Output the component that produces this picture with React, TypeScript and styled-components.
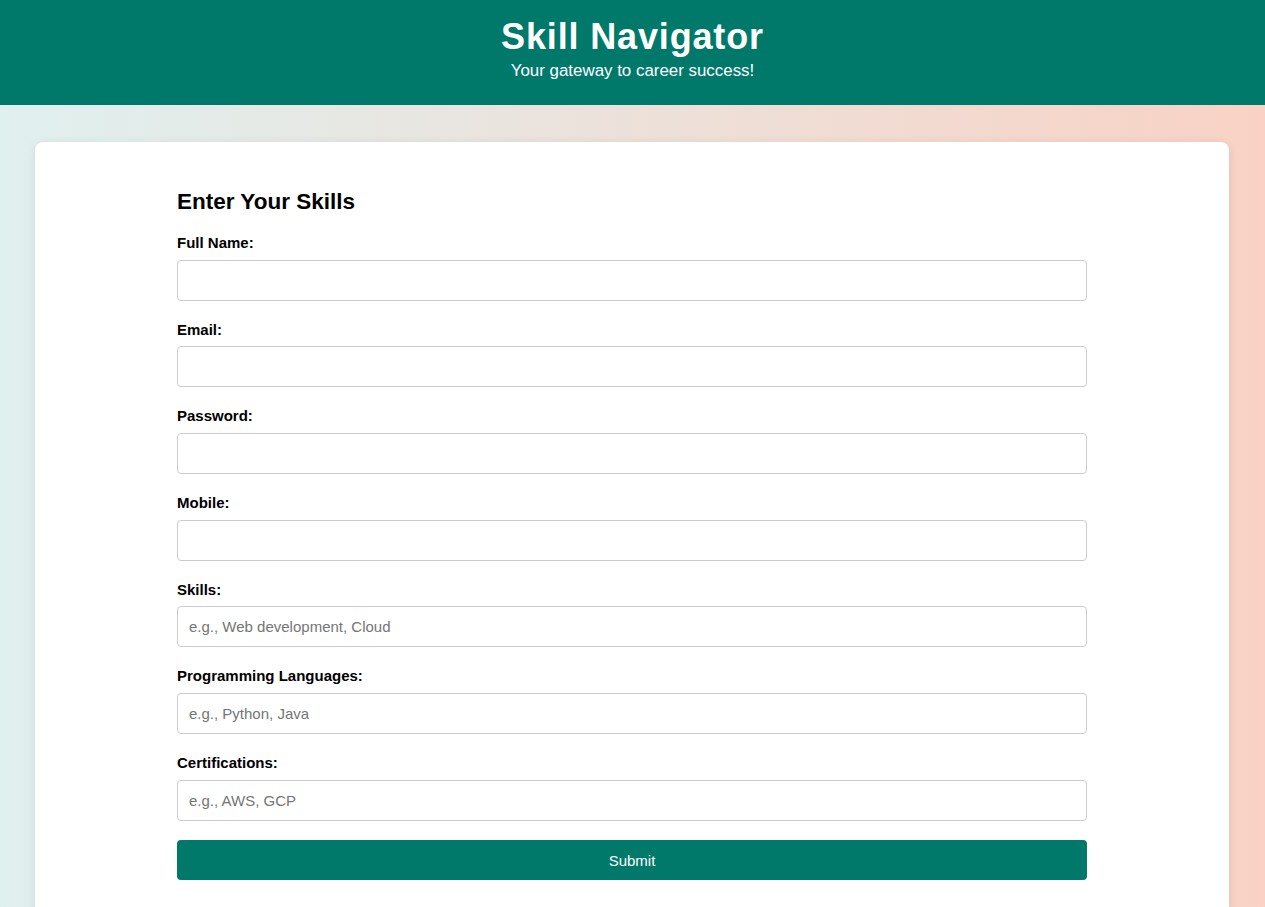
import React from "react";
import styled, { createGlobalStyle } from "styled-components";

const GlobalStyle = createGlobalStyle`
  * { box-sizing: border-box; }
  html, body {
    margin: 0;
    padding: 0;
    font-family: "Liberation Sans", Arial, sans-serif;
  }
  body {
    min-height: 907px;
    background: linear-gradient(to right, #e0f0ef, #f9d2c5);
  }
`;

const Header = styled.header`
  height: 105px;
  background: #00796b;
  color: #ffffff;
  display: flex;
  flex-direction: column;
  align-items: center;
  padding-top: 16px;
`;

const Title = styled.h1`
  margin: 0;
  font-size: 36px;
  line-height: 42px;
  font-weight: bold;
  letter-spacing: 0.85px;
`;

const Subtitle = styled.p`
  margin: 3px 0 0;
  font-size: 16.9px;
  line-height: 19px;
`;

const Main = styled.main`
  padding: 37px 36px 0 35px;
`;

const Card = styled.section`
  background: #ffffff;
  border-radius: 8px;
  box-shadow: 0 2px 10px rgba(0, 0, 0, 0.1);
  padding: 47px 0 40px;
`;

const Form = styled.form`
  width: 910px;
  margin: 0 auto;
  display: flex;
  flex-direction: column;
`;

const Heading = styled.h2`
  margin: 0 0 19px;
  font-size: 22.5px;
  line-height: 26px;
  font-weight: bold;
  color: #000;
`;

const Field = styled.div`
  display: flex;
  flex-direction: column;
  margin-bottom: 20px;
  &:last-of-type {
    margin-bottom: 19.5px;
  }
`;

const Label = styled.label`
  font-size: 15px;
  line-height: 17.5px;
  font-weight: bold;
  color: #000;
  margin-bottom: 8px;
`;

const Input = styled.input`
  height: 41.2px;
  width: 100%;
  padding: 0 11px;
  border: 1px solid #cccccc;
  border-radius: 4px;
  font-family: "Liberation Sans", Arial, sans-serif;
  font-size: 15px;
  color: #000;
  background: #fff;
  outline: none;
  &::placeholder {
    color: #757575;
  }
`;

const Button = styled.button`
  height: 40px;
  width: 100%;
  border: none;
  border-radius: 4px;
  background: #00796b;
  color: #ffffff;
  font-family: "Liberation Sans", Arial, sans-serif;
  font-size: 15px;
  cursor: pointer;
`;

const fields: { label: string; type: string; placeholder?: string }[] = [
  { label: "Full Name:", type: "text" },
  { label: "Email:", type: "email" },
  { label: "Password:", type: "password" },
  { label: "Mobile:", type: "tel" },
  { label: "Skills:", type: "text", placeholder: "e.g., Web development, Cloud" },
  { label: "Programming Languages:", type: "text", placeholder: "e.g., Python, Java" },
  { label: "Certifications:", type: "text", placeholder: "e.g., AWS, GCP" },
];

export default function App() {
  return (
    <>
      <GlobalStyle />
      <Header>
        <Title>Skill Navigator</Title>
        <Subtitle>Your gateway to career success!</Subtitle>
      </Header>
      <Main>
        <Card>
          <Form onSubmit={(e) => e.preventDefault()}>
            <Heading>Enter Your Skills</Heading>
            {fields.map((f, i) => (
              <Field key={f.label}>
                <Label htmlFor={`f${i}`}>{f.label}</Label>
                <Input id={`f${i}`} type={f.type} placeholder={f.placeholder} />
              </Field>
            ))}
            <Button type="submit">Submit</Button>
          </Form>
        </Card>
      </Main>
    </>
  );
}
